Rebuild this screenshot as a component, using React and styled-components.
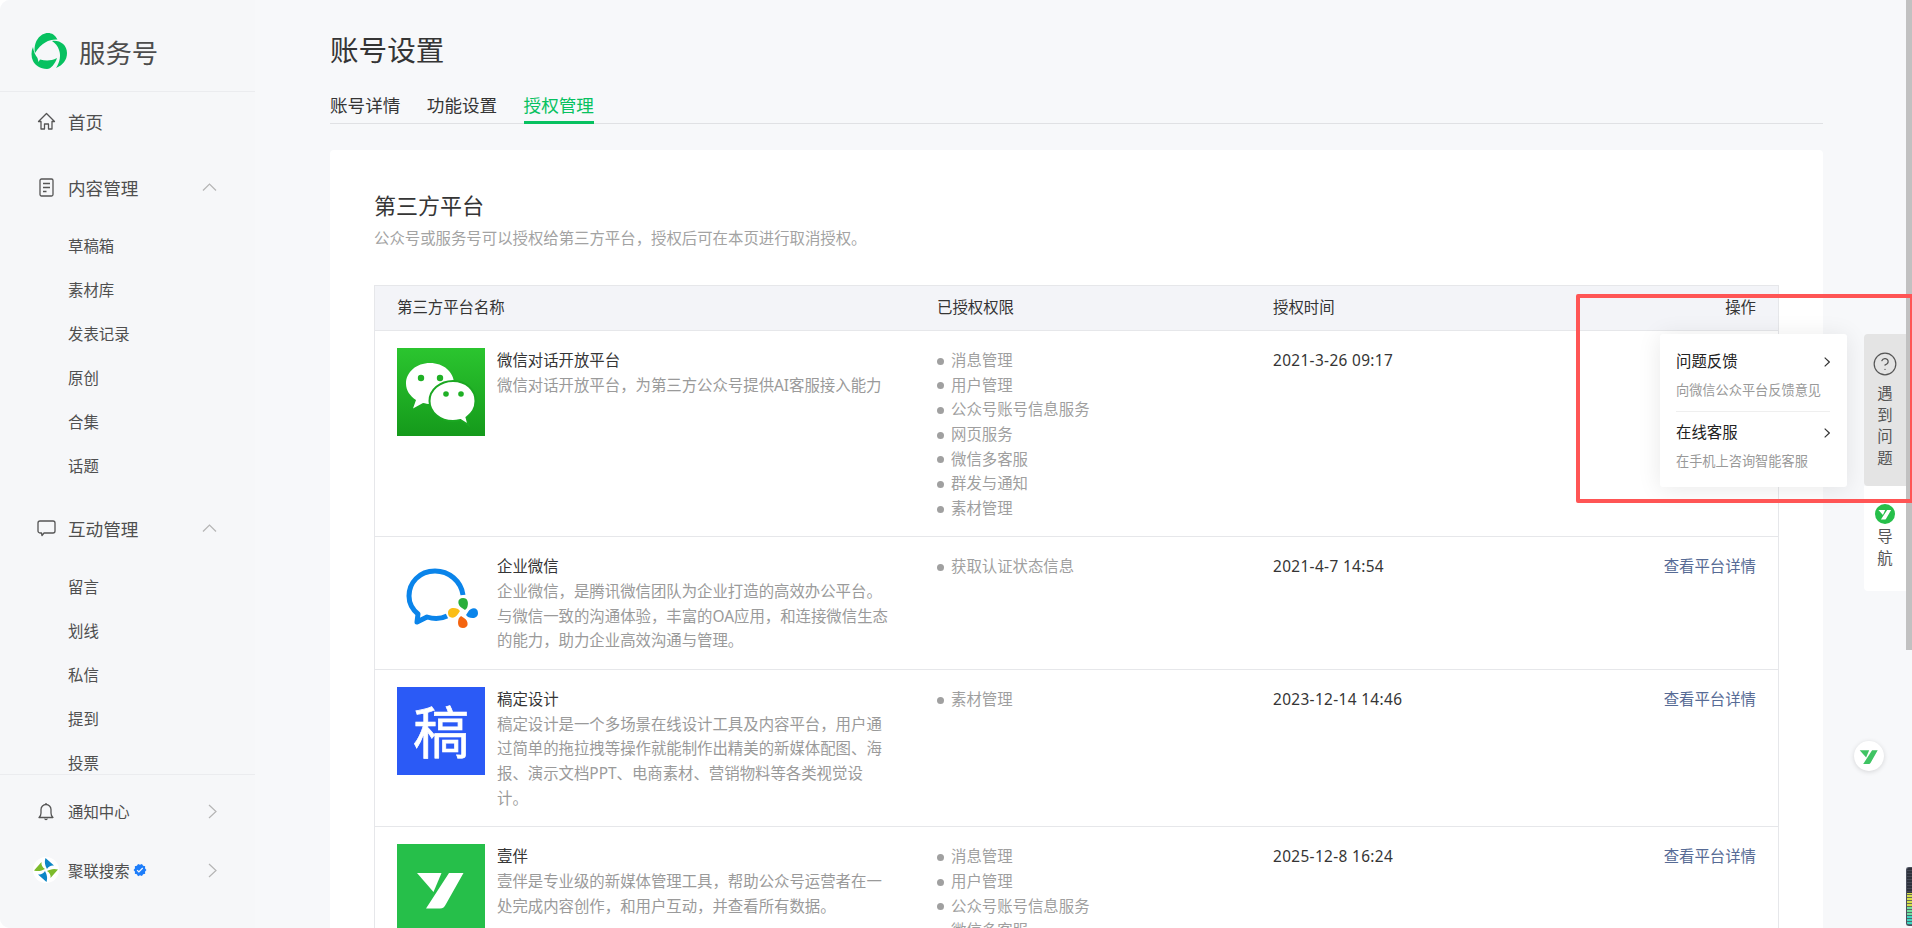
import React from "react"
import styled, { createGlobalStyle } from "styled-components"
import { CircleHelp } from "lucide-react"
import { MdVerified } from "react-icons/md"

const GlobalStyle = createGlobalStyle`
  html, body {
    margin: 0;
    height: 100%;
    background: #fff;
    overflow: hidden;
  }
  * { box-sizing: border-box; }
  body {
    font-family: "Noto Sans", "Noto Sans CJK SC", sans-serif;
    color: #353535;
  }
`

const Shell = styled.div`
  position: relative;
  display: flex;
  height: 928px;
  overflow: hidden;
  background: #f7f8fa;
  border-radius: 10px 0 0 10px;
`

const Sidebar = styled.aside`
  width: 255px;
  flex: none;
  display: flex;
  flex-direction: column;
  background: #f6f7f9;
  color: #4f4f4f;
`

const Brand = styled.div`
  height: 92px;
  flex: none;
  display: flex;
  align-items: center;
  gap: 12px;
  padding: 11px 0 0 31px;
  border-bottom: 1px solid #ebecef;
  font-size: 26.4px;
  color: #4d4d4d;
`

const Nav = styled.nav`
  flex: 1;
  min-height: 0;
  overflow: hidden;
  padding-top: 7px;
`

const Row = styled.div`
  height: 44px;
  display: flex;
  align-items: center;
  padding: 0 38px 0 36px;
  font-size: ${p => p.$small ? "15.4px" : "17.6px"};
  margin-bottom: ${p => p.$after || 0}px;
`

const IconBox = styled.span`
  width: 20px;
  height: 20px;
  flex: none;
  display: flex;
  align-items: center;
  justify-content: center;
  margin-right: 12px;
  color: #555;
`

const RowLabel = styled.span`
  flex: 1;
  display: flex;
  align-items: center;
  gap: 3px;
  white-space: nowrap;
`

const SubList = styled.div`
  margin: 16px 0 17px;
`

const SubItem = styled.div`
  height: 44px;
  line-height: 44px;
  padding-left: 68px;
  font-size: 15.4px;
`

const SideFooter = styled.div`
  flex: none;
  height: 154px;
  padding-top: 14px;
  border-top: 1px solid #ebecef;
  display: flex;
  flex-direction: column;
  gap: 15px;
`

const Main = styled.main`
  flex: 1;
  min-width: 0;
  padding: 32px 89px 0 75px;
  overflow: hidden;
`

const PageTitle = styled.h1`
  margin: 0;
  font-size: 28.6px;
  line-height: 36px;
  font-weight: 400;
  color: #353535;
`

const TabBar = styled.div`
  display: flex;
  gap: 26.4px;
  margin-top: 23px;
  border-bottom: 1px solid #e0e1e4;
`

const Tab = styled.div`
  font-size: 17.6px;
  line-height: 28px;
  height: 33px;
  margin-bottom: -1px;
  color: ${p => p.$active ? "#07c160" : "#353535"};
  border-bottom: 3px solid ${p => p.$active ? "#07c160" : "transparent"};
`

const Card = styled.section`
  margin-top: 26px;
  padding: 40px 44px 40px 44px;
  background: #fff;
  border-radius: 4px;
`

const CardTitle = styled.h2`
  margin: 0;
  font-size: 22px;
  line-height: 30px;
  font-weight: 400;
`

const CardDesc = styled.p`
  margin: 7px 0 34px;
  font-size: 15.4px;
  line-height: 24px;
  color: #a3a3a3;
`

const Table = styled.div`
  border: 1px solid #e6e7ea;
  border-bottom: 0;
`

const TableRow = styled.div`
  display: grid;
  grid-template-columns: 540px 336px 1fr 200px;
  font-size: 15.4px;
  line-height: 24.64px;
  border-bottom: 1px solid #e6e7ea;
`

const HeadRow = styled(TableRow)`
  height: 45px;
  align-items: center;
  background: #f3f4f8;
`

const Cell = styled.div`
  padding: ${p => p.$head ? "0 22px" : "18px 22px 15px"};
  text-align: ${p => p.$right ? "right" : "left"};
`

const Platform = styled(Cell)`
  display: flex;
  gap: 12px;
`

const LogoBox = styled.div`
  width: 88px;
  height: 88px;
  flex: none;
  margin-top: -1px;
  display: flex;
  align-items: center;
  justify-content: center;
  color: #fff;
  background: ${p => p.$bg || "transparent"};
  font-size: 56px;
  font-weight: 400;
  line-height: 1;
  -webkit-text-stroke: 0.7px #fff;
`

const PlatformName = styled.div`
  color: #353535;
`

const PlatformDesc = styled.div`
  color: #9a9a9a;
`

const PermList = styled.ul`
  margin: 0;
  padding: 0;
  list-style: none;
  color: #9f9f9f;
`

const Perm = styled.li`
  display: flex;
  align-items: center;
  &::before {
    content: "";
    width: 7px;
    height: 7px;
    margin-right: 7px;
    border-radius: 50%;
    background: #a0a0a0;
  }
`

const TimeText = styled.span`
  letter-spacing: 0.35px;
`

const DetailLink = styled.a`
  color: #576b95;
`

const Popover = styled.div`
  position: absolute;
  left: 1660px;
  top: 334px;
  width: 187px;
  height: 153px;
  padding: 7px 17px 5px 16px;
  background: #fff;
  border-radius: 3px;
  box-shadow: 0 2px 24px rgba(0, 0, 0, 0.09);
`

const PopItem = styled.div`
  padding: 9px 0;
  border-bottom: ${p => p.$last ? "0" : "1px solid #efefef"};
`

const PopTitle = styled.div`
  display: flex;
  align-items: center;
  justify-content: space-between;
  font-size: 15.4px;
  line-height: 24px;
  color: #222;
`

const PopDesc = styled.div`
  margin-top: 4px;
  font-size: 13.2px;
  line-height: 24px;
  color: #999;
  white-space: nowrap;
`

const SideTabs = styled.div`
  position: absolute;
  left: 1864px;
  top: 334px;
  width: 42px;
  display: flex;
  flex-direction: column;
`

const HelpTab = styled.div`
  height: 152px;
  padding-top: 17px;
  display: flex;
  flex-direction: column;
  align-items: center;
  background: #e4e4e4;
  border-radius: 4px 0 0 4px;
  color: #555;
`

const GuideTab = styled.div`
  height: 105px;
  padding-top: 18px;
  display: flex;
  flex-direction: column;
  align-items: center;
  background: #fff;
  border-radius: 0 0 0 4px;
  color: #555;
`

const SideText = styled.div`
  width: 16px;
  margin-top: ${p => p.$gap}px;
  font-size: 15.4px;
  line-height: 21.6px;
  text-align: center;
`

const GreenBadge = styled.div`
  width: 20px;
  height: 20px;
  display: flex;
  align-items: center;
  justify-content: center;
  border-radius: 50%;
  background: #26bf4a;
  color: #fff;
  overflow: hidden;
  svg { flex: none; }
`

const FloatButton = styled.div`
  position: absolute;
  left: 1854px;
  top: 741px;
  width: 30px;
  height: 30px;
  display: flex;
  align-items: center;
  justify-content: center;
  border-radius: 50%;
  background: #fff;
  box-shadow: 0 1px 5px rgba(0, 0, 0, 0.14);
  color: #3fc463;
  overflow: hidden;
  svg { flex: none; }
`

const ScrollThumb = styled.div`
  position: absolute;
  right: 0;
  top: 0;
  width: 6px;
  height: 650px;
  background: #c1c1c1;
`

const EdgeWidget = styled.div`
  position: absolute;
  right: 0;
  top: 867px;
  width: 6px;
  height: 59px;
  border-radius: 3px 0 0 3px;
  border: 1px solid #4a4f5c;
  border-right: 0;
  background:
    repeating-linear-gradient(to bottom, transparent 0 2px, rgba(74, 79, 92, 0.8) 2px 3px),
    linear-gradient(to bottom, #2e323c 0 44%, #d6e04a 44% 68%, #6fe0a0 68% 82%, #3fd6c0 82% 100%);
`

const RedBox = styled.div`
  position: absolute;
  left: 1576px;
  top: 294px;
  width: 338px;
  height: 209px;
  border: 4px solid #ff5555;
  border-radius: 2px;
  pointer-events: none;
`

const Swirl = () => (
  <svg width="36" height="36" viewBox="0 0 36 36" fill="#07c160">
    <path d="M4 20C2 9 9 0 17 0c4 0 7 2 9.500 6.500C19 6 11 9 4 20Z" />
    <path d="M21 8c8-1 15 4 15 12 0 7-4 12-11 15 4-6 5-13 3-18-1-4-4-7-7-9Z" />
    <path d="M2 14C0 18 0 24 2 28c2 4 7 8 14 8 4 0 8-5 10-11-6 3-11 3-17 1.500L7.500 29 6.500 25C4 22 2.500 18 2 14Z" />
  </svg>
)

const HomeIcon = () => (
  <svg width="19" height="19" viewBox="0 0 19 19" fill="none" stroke="currentColor" strokeWidth="1.3" strokeLinejoin="round">
    <path d="M9.500 1.500 1.500 9.500h2.500v7.500h3.500v-5h4v5H15V9.500h2.500Z" />
  </svg>
)

const DocIcon = () => (
  <svg width="15" height="19" viewBox="0 0 15 19" fill="none" stroke="currentColor" strokeWidth="1.3">
    <rect x="1" y="1" width="13" height="17" rx="1.500" />
    <path d="M4 5.500h7M4 9.500h7M4 13.500h3.500" />
  </svg>
)

const ChatIcon = () => (
  <svg width="19" height="17" viewBox="0 0 19 17" fill="none" stroke="currentColor" strokeWidth="1.3" strokeLinejoin="round">
    <path d="M3 1h13a2 2 0 0 1 2 2v8a2 2 0 0 1-2 2H7l-2 2.500L4.500 13H3a2 2 0 0 1-2-2V3a2 2 0 0 1 2-2Z" />
  </svg>
)

const BellIcon = () => (
  <svg width="16" height="19" viewBox="0 0 16 19" fill="none" stroke="currentColor" strokeWidth="1.3" strokeLinejoin="round">
    <path d="M1 15.500c1.500-1 2-2.500 2-4.500V7.500a5 5 0 0 1 10 0V11c0 2 .5 3.500 2 4.500Z" />
    <path d="M8 1v1M6.800 16.500c.2 1.500 2.200 1.500 2.400 0" />
  </svg>
)

const ChevronUp = () => (
  <svg width="15" height="8" viewBox="0 0 15 8" fill="none" stroke="#b5b5b5" strokeWidth="1.2">
    <path d="M1 7.500 7.500 1 14 7.500" />
  </svg>
)

const ChevronRight = ({ color = "#b5b5b5", w = 9, h = 15, sw = 1.2 }) => (
  <svg width={w} height={h} viewBox="0 0 9 15" fill="none" stroke={color} strokeWidth={sw}>
    <path d="M1 1l7 6.500L1 14" />
  </svg>
)

const Pinwheel = () => (
  <svg width="26" height="26" viewBox="0 0 26 26" style={{ flex: "none" }}>
    <circle cx="13" cy="13" r="13" fill="#fff" />
    {[["#0c86c6", 0], ["#7dbb2c", 90], ["#0c86c6", 180], ["#7dbb2c", 270]].map(([color, angle]) => (
      <path key={angle} d="M12.500 1 21 8.500c-3-.5-5.500 1-7 3.500-1.500-3-3-6.500-1.500-11Z" fill={color} transform={`rotate(${angle} 13 13)`} />
    ))}
  </svg>
)

const WechatLogo = () => (
  <svg width="88" height="88" viewBox="0 0 88 88">
    <defs>
      <linearGradient id="wechatBg" x1="0" y1="0" x2="0" y2="1">
        <stop offset="0" stopColor="#2bc52f" />
        <stop offset="1" stopColor="#159a1b" />
      </linearGradient>
    </defs>
    <rect width="88" height="88" fill="url(#wechatBg)" />
    <path d="M33 15c-13.500 0-24 9-24 20.500 0 7 4 12.500 10 16.500l-3 8.500 10-5.500c2.500.5 4.500 1 7 1 13 0 24-9 24-20.500S46.500 15 33 15Z" fill="#fff" />
    <circle cx="24" cy="30" r="3.200" fill="#1fb025" />
    <circle cx="43" cy="30" r="3.200" fill="#1fb025" />
    <path d="M56 33c-13 0-23.500 8.800-23.500 20s10.500 20 23.500 20c2.500 0 5-.5 7.500-1l8 5-2-7.500c5.500-4 9-10 9-16.500 0-11.200-9.500-20-22.500-20Z" fill="#fff" stroke="#1ba722" strokeWidth="2" />
    <circle cx="49" cy="46" r="2.800" fill="#1fb025" />
    <circle cx="64" cy="46" r="2.800" fill="#1fb025" />
  </svg>
)

const WecomLogo = () => (
  <svg width="88" height="88" viewBox="0 0 88 88">
    <path d="M66 41C64 27 52 17 38 17 22 17 12 29 12 42c0 7 3 13 9 18l-1 8 10-5c6 2 14 2 20-1" fill="none" stroke="#0a84ea" strokeWidth="5" strokeLinejoin="round" />
    {[["#2aae3a", 0], ["#0a84ea", 90], ["#f4640f", 180], ["#fbbd16", 270]].map(([color, angle]) => (
      <path key={angle} d="M-1-5C-6-8-6-15 0-15c5 0 6 5 4 10L2-3Z" fill={color} transform={`translate(66 59) rotate(${angle})`} />
    ))}
  </svg>
)

const YibanMark = ({ size }) => (
  <svg width={size} height={size} viewBox="0 0 88 88" fill="currentColor">
    <path d="M20 29h24.500L36.500 48Z" />
    <path d="M52 29h14.500L49 60c-1.500 3-3 4.500-6 4.500H29Z" />
  </svg>
)

const perms = ["消息管理", "用户管理", "公众号账号信息服务", "网页服务", "微信多客服", "群发与通知", "素材管理"]

const rows = [
  {
    name: "微信对话开放平台",
    desc: "微信对话开放平台，为第三方公众号提供AI客服接入能力",
    logo: <LogoBox><WechatLogo /></LogoBox>,
    perms,
    time: "2021-3-26 09:17",
    covered: true,
  },
  {
    name: "企业微信",
    desc: "企业微信，是腾讯微信团队为企业打造的高效办公平台。与微信一致的沟通体验，丰富的OA应用，和连接微信生态的能力，助力企业高效沟通与管理。",
    logo: <LogoBox><WecomLogo /></LogoBox>,
    perms: ["获取认证状态信息"],
    time: "2021-4-7 14:54",
  },
  {
    name: "稿定设计",
    desc: "稿定设计是一个多场景在线设计工具及内容平台，用户通过简单的拖拉拽等操作就能制作出精美的新媒体配图、海报、演示文档PPT、电商素材、营销物料等各类视觉设计。",
    logo: <LogoBox $bg="#2b5af6">稿</LogoBox>,
    perms: ["素材管理"],
    time: "2023-12-14 14:46",
  },
  {
    name: "壹伴",
    desc: "壹伴是专业级的新媒体管理工具，帮助公众号运营者在一处完成内容创作，和用户互动，并查看所有数据。",
    logo: <LogoBox $bg="#26bf4a"><YibanMark size={88} /></LogoBox>,
    perms: ["消息管理", "用户管理", "公众号账号信息服务", "微信多客服"],
    time: "2025-12-8 16:24",
  },
]

function SideNav() {
  return (
    <Sidebar>
      <Brand><Swirl />服务号</Brand>
      <Nav>
        <Row $after={22}>
          <IconBox><HomeIcon /></IconBox>
          <RowLabel>首页</RowLabel>
        </Row>
        <Row>
          <IconBox><DocIcon /></IconBox>
          <RowLabel>内容管理</RowLabel>
          <ChevronUp />
        </Row>
        <SubList>
          {["草稿箱", "素材库", "发表记录", "原创", "合集", "话题"].map(t => <SubItem key={t}>{t}</SubItem>)}
        </SubList>
        <Row>
          <IconBox><ChatIcon /></IconBox>
          <RowLabel>互动管理</RowLabel>
          <ChevronUp />
        </Row>
        <SubList>
          {["留言", "划线", "私信", "提到", "投票"].map(t => <SubItem key={t}>{t}</SubItem>)}
        </SubList>
      </Nav>
      <SideFooter>
        <Row $small>
          <IconBox><BellIcon /></IconBox>
          <RowLabel>通知中心</RowLabel>
          <ChevronRight />
        </Row>
        <Row $small>
          <IconBox><Pinwheel /></IconBox>
          <RowLabel>聚联搜索<MdVerified size={14} color="#1d7dfa" /></RowLabel>
          <ChevronRight />
        </Row>
      </SideFooter>
    </Sidebar>
  )
}

function App() {
  return (
    <>
      <GlobalStyle />
      <Shell>
        <SideNav />
        <Main>
          <PageTitle>账号设置</PageTitle>
          <TabBar>
            <Tab>账号详情</Tab>
            <Tab>功能设置</Tab>
            <Tab $active>授权管理</Tab>
          </TabBar>
          <Card>
            <CardTitle>第三方平台</CardTitle>
            <CardDesc>公众号或服务号可以授权给第三方平台，授权后可在本页进行取消授权。</CardDesc>
            <Table>
              <HeadRow>
                <Cell $head>第三方平台名称</Cell>
                <Cell $head>已授权权限</Cell>
                <Cell $head>授权时间</Cell>
                <Cell $head $right>操作</Cell>
              </HeadRow>
              {rows.map(r => (
                <TableRow key={r.name}>
                  <Platform>
                    {r.logo}
                    <div>
                      <PlatformName>{r.name}</PlatformName>
                      <PlatformDesc>{r.desc}</PlatformDesc>
                    </div>
                  </Platform>
                  <Cell>
                    <PermList>
                      {r.perms.map(p => <Perm key={p}>{p}</Perm>)}
                    </PermList>
                  </Cell>
                  <Cell><TimeText>{r.time}</TimeText></Cell>
                  <Cell $right>{!r.covered && <DetailLink>查看平台详情</DetailLink>}</Cell>
                </TableRow>
              ))}
            </Table>
          </Card>
        </Main>
        <FloatButton><YibanMark size={34} /></FloatButton>
        <Popover>
          <PopItem>
            <PopTitle>问题反馈<ChevronRight color="#333" w={6} h={10} sw={1.8} /></PopTitle>
            <PopDesc>向微信公众平台反馈意见</PopDesc>
          </PopItem>
          <PopItem $last>
            <PopTitle>在线客服<ChevronRight color="#333" w={6} h={10} sw={1.8} /></PopTitle>
            <PopDesc>在手机上咨询智能客服</PopDesc>
          </PopItem>
        </Popover>
        <SideTabs>
          <HelpTab>
            <CircleHelp size={26} strokeWidth={1.1} />
            <SideText $gap={6}>遇到问题</SideText>
          </HelpTab>
          <GuideTab>
            <GreenBadge><YibanMark size={24} /></GreenBadge>
            <SideText $gap={2}>导航</SideText>
          </GuideTab>
        </SideTabs>
        <ScrollThumb />
        <EdgeWidget />
        <RedBox />
      </Shell>
    </>
  )
}

export default App
